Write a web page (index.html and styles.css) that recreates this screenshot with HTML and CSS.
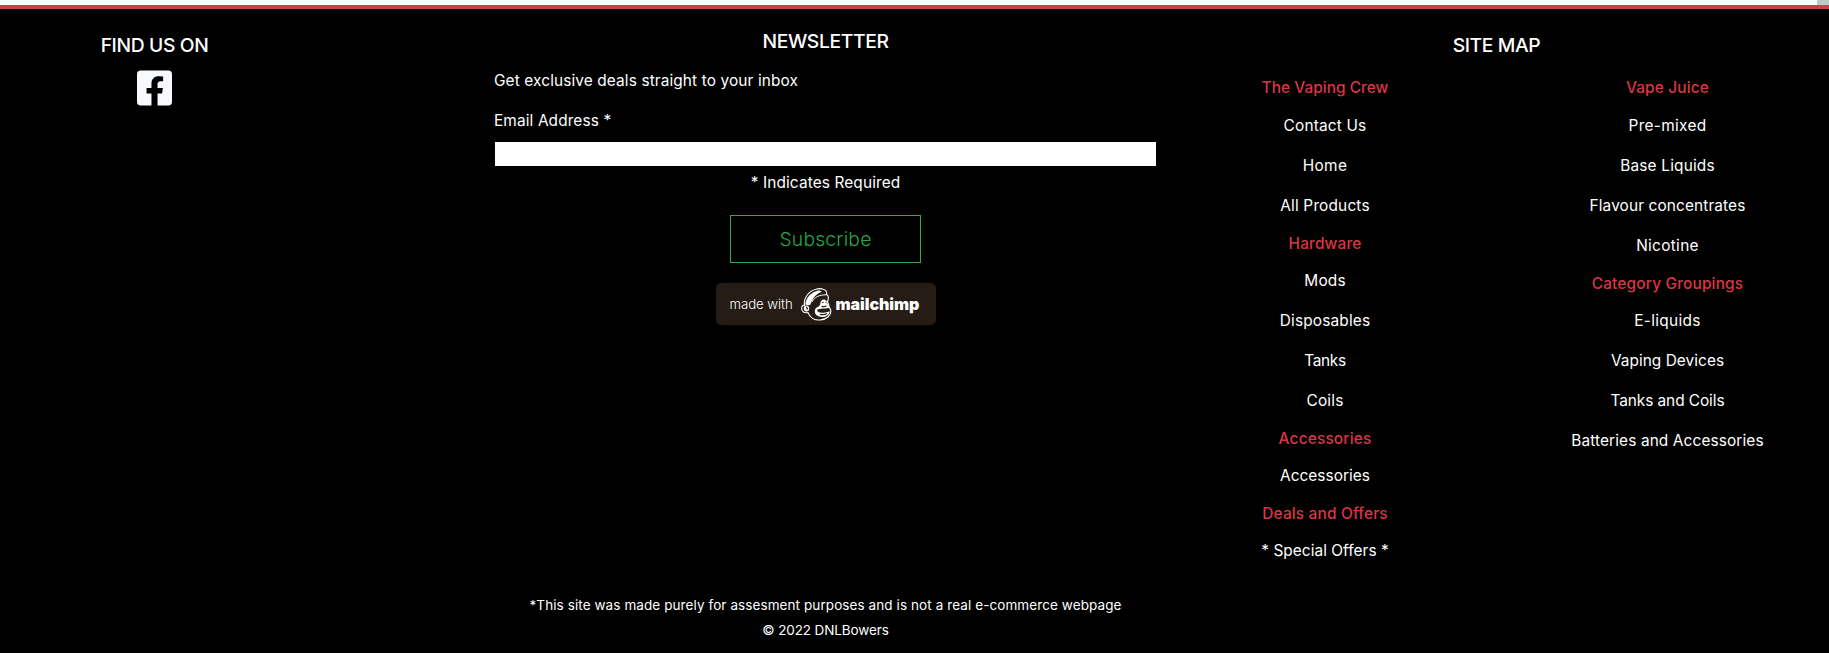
FILE: index.html
```html
<!DOCTYPE html>
<html lang="en">
<head>
<meta charset="utf-8">
<title>The Vaping Crew</title>
<link rel="stylesheet" href="styles.css">
</head>
<body>
<div class="page-edge"><span class="scroll-corner"></span></div>
<footer class="footer">
  <div class="columns">
    <section class="social">
      <h2 class="title">FIND US ON</h2>
      <a class="fb" href="#" aria-label="Facebook"><svg viewBox="0 32 448 448"><path d="M400 32H48A48 48 0 0 0 0 80v352a48 48 0 0 0 48 48h137.25V327.69h-63V256h63v-54.64c0-62.15 37-96.48 93.67-96.48 27.14 0 55.52 4.84 55.52 4.84v61h-31.27c-30.81 0-40.42 19.12-40.42 38.73V256h68.78l-11 71.69h-57.78V480H400a48 48 0 0 0 48-48V80a48 48 0 0 0-48-48z"/></svg></a>
    </section>
    <section class="newsletter">
      <h2 class="title">NEWSLETTER</h2>
      <p class="lead">Get exclusive deals straight to your inbox</p>
      <label class="field-label" for="email">Email Address *</label>
      <input class="field" id="email" type="email">
      <p class="required">* Indicates Required</p>
      <button class="subscribe" type="button">Subscribe</button>
      <a class="badge" href="#">
        <span class="made">made with</span>
        <svg class="chimp" viewBox="0 0 31 33">
          <path class="face" d="M3.500 17.500C1 16.500 0 20 1.200 22.500C2.500 25 5.500 24.800 7 24.500C9 30 14 32.500 19 32C26 31.500 30.500 27 29.800 22.500C29.500 20.500 28 20 28 18C27.500 16 27 15 26.500 13.500C28 10 27.500 7 25.500 6.500C26 4 25 1.500 22 1.200C20 .4 17.500 .5 15 1.300C8 3 2 10 3.500 17.500Z"/>
          <path class="hair" d="M4.300 16.500C5 9.500 10.500 3.800 17.500 2.500C19 2.500 20 3 20.500 4C14.500 6 11.500 10.500 9.500 16.500C7.500 18 6 17 4.300 16.500Z"/>
          <path class="line" d="M11 14C13.500 9 18 6.800 25.500 6.800"/>
          <path class="hair" d="M19.500 14.500C20 11.500 23.500 9.800 26 13.500C26.200 15.500 27.500 17.500 28.500 19.500C25.500 21.200 22 19.800 16.500 21.500C15.500 24 19 26.300 28.800 23.200C28.300 28 22.500 30 18 28.500C13.500 27 12.800 22.500 15 20C17.500 18.800 19.500 17.500 19.500 14.500Z"/>
          <path class="dark" d="M21 14.800l1.500-.5M24.500 14.500l1 .3M20.500 18.200q3 1.200 5-.6M19 26.300q4 1 7-.8"/>
          <ellipse class="hair" cx="5.500" cy="20.500" rx="2.700" ry="3"/>
          <path class="dark" d="M5 19.300q1.700 .2 1.200 2.400"/>
        </svg>
        <span class="brand">mailchimp</span>
      </a>
    </section>
    <section class="sitemap">
      <h2 class="title">SITE MAP</h2>
      <div class="links">
        <ul>
          <li class="head tight">The Vaping Crew</li>
          <li>Contact Us</li><li class="wide">Home</li><li>All Products</li>
          <li class="head">Hardware</li>
          <li>Mods</li><li>Disposables</li><li class="narrow">Tanks</li><li>Coils</li>
          <li class="head">Accessories</li>
          <li class="tight">Accessories</li>
          <li class="head">Deals and Offers</li>
          <li class="tight">* Special Offers *</li>
        </ul>
        <ul>
          <li class="head">Vape Juice</li>
          <li class="wide">Pre-mixed</li><li>Base Liquids</li><li class="close">Flavour concentrates</li><li class="wide">Nicotine</li>
          <li class="head">Category Groupings</li>
          <li class="wide">E-liquids</li><li class="tight">Vaping Devices</li><li class="snug">Tanks and Coils</li><li class="close">Batteries and Accessories</li>
        </ul>
      </div>
    </section>
  </div>
  <div class="legal">
    <p>*This site was made purely for assesment purposes and is not a real e-commerce webpage</p>
    <p class="copyright">© 2022 DNLBowers</p>
  </div>
</footer>
</body>
</html>
```
FILE: styles.css
```css
* { box-sizing: border-box; }
body { margin: 0; background: #000; color: #fff; font-family: Inter, "Liberation Sans", sans-serif; font-size: 15.4px; letter-spacing: .12px; }
h2, p, ul { margin: 0; padding: 0; }
.page-edge { height: 5px; background: #fffdfd; display: flex; justify-content: flex-end; }
.scroll-corner { width: 12px; background: #c8c5c7; }
.footer { height: 648px; background: #000; border-top: 4px solid #c8414f; }
.columns { display: grid; grid-template-columns: 309px 1fr 663px; height: 573px; }
.title { font-size: 19.3px; line-height: 24px; font-weight: 500; text-align: center; letter-spacing: -.38px; }
.social { display: flex; flex-direction: column; align-items: center; padding-top: 24px; gap: 13px; }
.fb { width: 35px; height: 36px; }
.fb svg { display: block; width: 35px; height: 36px; fill: #f8f9fd; }
.newsletter { display: flex; flex-direction: column; padding: 20px 9px 0 185px; line-height: 24px; }
.lead { margin-top: 16px; }
.field-label { margin-top: 16px; }
.field { width: 661px; height: 24px; margin: 9px 0 0 1px; border: 0; background: #fff; }
.required { text-align: center; margin-top: 5px; }
.subscribe { align-self: center; width: 191px; height: 48px; margin-top: 20px; padding: 0; border: 1px solid #35a65a; background: transparent; color: #28a745; font: 350 19.3px Inter, sans-serif; letter-spacing: .2px; }
.badge { align-self: center; width: 220px; height: 42px; margin-top: 20px; border-radius: 5px; background: #241c15; color: #fff; text-decoration: none; display: flex; align-items: center; padding-left: 14px; }
.made { width: 71px; font-size: 13.2px; font-weight: 300; letter-spacing: -.04px; white-space: nowrap; }
.chimp { width: 31px; height: 33px; margin-right: 4px; }
.face { fill: #241c15; stroke: #fff; stroke-width: 1.1; }
.hair { fill: #fff; }
.line { fill: none; stroke: #fff; stroke-width: 1; }
.dark { fill: none; stroke: #241c15; stroke-width: 1.2; }
.brand { font-size: 16px; font-weight: 900; letter-spacing: -.05px; }
.sitemap { padding: 24px 0 0; }
.sitemap .title { padding-right: 2px; }
.links { display: grid; grid-template-columns: 318px 323px; column-gap: 22px; padding-top: 13px; }
ul { list-style: none; text-align: center; letter-spacing: .18px; }
li { height: 40px; line-height: 40px; }
.head { height: 35px; line-height: 35px; color: #dc3545; font-weight: 500; }
.head:first-child { height: 36px; }
.close { letter-spacing: .12px; }
.tight { letter-spacing: .05px; }
.snug { letter-spacing: -.07px; }
.narrow { letter-spacing: -.32px; }
.wide { letter-spacing: .32px; }
.legal { text-align: center; width: 1651px; font-size: 13.5px; line-height: 25px; padding-top: 11px; letter-spacing: .088px; }
.copyright { letter-spacing: -.11px; }
```
